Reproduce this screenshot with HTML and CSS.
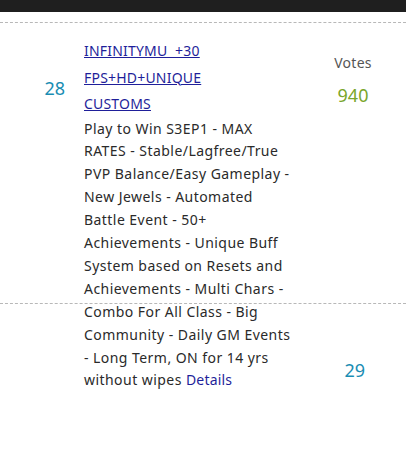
FILE: index.html
```html
<!DOCTYPE html>
<html>
<head>
<meta charset="utf-8">
<link rel="stylesheet" href="styles.css">
</head>
<body>
<div class="topbar"></div>
<div class="list">
  <div class="row">
    <div class="rank">28</div>
    <div class="info">
      <a class="title" href="#">INFINITYMU&nbsp; +30<br>FPS+HD+UNIQUE<br>CUSTOMS</a>
      <p class="desc">Play to Win S3EP1 - MAX<br>RATES - Stable/Lagfree/True<br>PVP Balance/Easy Gameplay -<br>New Jewels - Automated<br>Battle Event - 50+<br>Achievements - Unique Buff<br>System based on Resets and<br>Achievements - Multi Chars -<br>Combo For All Class - Big<br>Community - Daily GM Events<br>- Long Term, ON for 14 yrs<br>without wipes <a class="details" href="#">Details</a></p>
    </div>
    <div class="votes">
      <div class="votes-label">Votes</div>
      <div class="votes-count">940</div>
    </div>
  </div>
  <div class="row row-next">
    <div class="rank rank-side">29</div>
  </div>
</div>
</body>
</html>
```

FILE: styles.css
```css
html, body {
  margin: 0;
  padding: 0;
  background: #fff;
}
body {
  font-family: "Noto Sans", "DejaVu Sans", sans-serif;
  color: #2a2a2a;
}
.topbar {
  height: 12px;
  background: #1f1f1f;
}
.list {
  margin-top: 10px;
}
.row {
  border-top: 1px dashed #b8b8b8;
  height: 280px;
  display: grid;
  grid-template-columns: 84px 216px 106px;
}
.rank {
  font-size: 18px;
  line-height: 20px;
  color: #1a8db3;
  padding-top: 55px;
  text-align: right;
  padding-right: 19px;
}
.info {
  position: relative;
  z-index: 1;
}
.title {
  display: block;
  margin-top: 15px;
  font-size: 14px;
  line-height: 26.5px;
  color: #1f1f9a;
  text-decoration: underline;
  text-decoration-thickness: 1px;
  letter-spacing: 0.2px;
}
.desc {
  margin: 0;
  font-size: 14px;
  line-height: 22.9px;
  color: #2a2a2a;
  letter-spacing: 0.45px;
}
.details {
  color: #1f1f9a;
  text-decoration: none;
  letter-spacing: 0.2px;
}
.votes {
  text-align: center;
}
.votes-label {
  margin-top: 30px;
  font-size: 14px;
  line-height: 20px;
  color: #555;
  letter-spacing: 0.3px;
}
.votes-count {
  margin-top: 12px;
  font-size: 18px;
  line-height: 20px;
  color: #79a62b;
}
.row-next {
  height: 126px;
  grid-template-columns: 1fr;
}
.rank-side {
  text-align: right;
  padding-right: 41px;
  padding-top: 56px;
}
```
